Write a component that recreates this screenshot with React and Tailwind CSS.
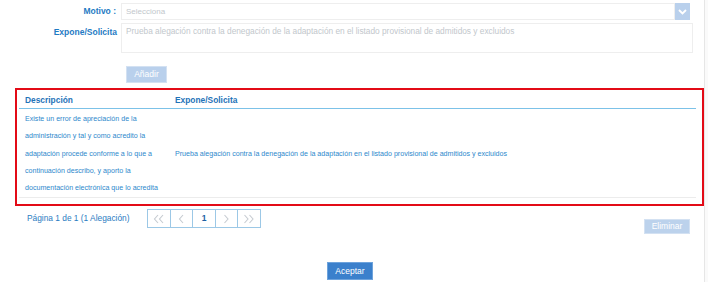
import React from "react";

const descripcion = [
  "Existe un error de apreciación de la",
  "administración y tal y como acredito la",
  "adaptación procede conforme a lo que a",
  "continuación describo, y aporto la",
  "documentación electrónica que lo acredita",
];

const expone =
  "Prueba alegación contra la denegación de la adaptación en el listado provisional de admitidos y excluidos";

function Chevron({ dir = "left", double = false }) {
  const one = dir === "left" ? "M5 1 L1.5 5 L5 9" : "M1.5 1 L5 5 L1.5 9";
  const two = dir === "left" ? "M10 1 L6.5 5 L10 9" : "M6.5 1 L10 5 L6.5 9";
  return (
    <svg width={double ? 12 : 7} height="10" viewBox={`0 0 ${double ? 12 : 7} 10`}>
      <path d={one} fill="none" stroke="#c6cbd1" strokeWidth="1.1" />
      {double && <path d={two} fill="none" stroke="#c6cbd1" strokeWidth="1.1" />}
    </svg>
  );
}

function PagerCell({ width, children, active }) {
  return (
    <div
      className={`${width} h-full flex items-center justify-center border-r border-[#9cc8e6] last:border-r-0 ${
        active ? "text-[#1d5fa3] text-[8.5px] font-bold" : ""
      }`}
    >
      {children}
    </div>
  );
}

export default function App() {
  return (
    <div className="relative w-[708px] h-[282px] bg-white overflow-hidden font-['Liberation_Sans',Arial,sans-serif]">
      {/* scrollbar strip */}
      <div className="absolute right-0 top-0 h-full w-[4px] border-l border-[#e6e6e6] bg-[#fafafa]" />

      <div className="flex flex-col">
        {/* Motivo */}
        <div className="flex items-center mt-[3px] h-[17px]">
          <div className="w-[121px] pr-[5px] text-right text-[8.5px] font-bold text-[#1f7bc4]">Motivo :</div>
          <div className="w-[554px] h-full border border-[#eeeeee] flex items-center px-[4px] text-[8px] text-[#c2c7cc]">
            Selecciona
          </div>
          <div className="w-[15px] h-full bg-[#b9d0ec] flex items-center justify-center">
            <svg width="9" height="6" viewBox="0 0 9 6">
              <path d="M1 1 L4.5 4.5 L8 1" fill="none" stroke="white" strokeWidth="1.8" />
            </svg>
          </div>
        </div>

        {/* Expone/Solicita */}
        <div className="flex items-start mt-[3px] h-[30px]">
          <div className="w-[121px] pr-[4px] pt-[3px] text-right text-[8.5px] font-bold text-[#1f7bc4]">Expone/Solicita</div>
          <div className="w-[572px] h-full border border-[#eeeeee] px-[4px] pt-[2px] text-[8.3px] leading-[11px] text-[#c2c7cc]">
            {expone}
          </div>
        </div>

        {/* Añadir */}
        <div className="ml-[126px] mt-[13px] w-[41px] h-[17px] bg-[#b9d0ec] border border-[#d3e1f2] flex items-center justify-center text-[8.5px] text-white">
          Añadir
        </div>

        {/* Tabla */}
        <div className="ml-[15px] mt-[5px] w-[689px] h-[118px] border-2 border-[#e30b17]">
          <div className="ml-[2px] mr-[6px] flex flex-col">
            <div className="flex h-[19px] items-center border-b border-[#7cc2e8] text-[8.4px] font-bold text-[#1f73b8]">
              <div className="w-[156px] pl-[6px] pt-[3px]">Descripción</div>
              <div className="pt-[3px]">Expone/Solicita</div>
            </div>
            <div className="flex items-center pt-[2px] border-b border-[#ececec] text-[7.1px] leading-[17.3px] text-[#2d88cc]">
              <div className="w-[156px] pl-[6px]">
                {descripcion.map((l) => (
                  <div key={l} className="whitespace-nowrap">{l}</div>
                ))}
              </div>
              <div className="whitespace-nowrap">{expone}</div>
            </div>
          </div>
        </div>

        {/* Paginación */}
        <div className="flex items-start mt-[3px]">
          <div className="ml-[27px] w-[120px] h-[19px] flex items-center text-[8.35px] text-[#2a7cc2]">
            Página 1 de 1 (1 Alegación)
          </div>
          <div className="flex h-[19px] border border-[#9cc8e6]">
            <PagerCell width="w-[23px]"><Chevron dir="left" double /></PagerCell>
            <PagerCell width="w-[22px]"><Chevron dir="left" /></PagerCell>
            <PagerCell width="w-[23px]" active>1</PagerCell>
            <PagerCell width="w-[22px]"><Chevron dir="right" /></PagerCell>
            <PagerCell width="w-[22px]"><Chevron dir="right" double /></PagerCell>
          </div>
          <div className="ml-auto mr-[18px] mt-[10px] w-[46px] h-[15px] bg-[#bcd2ec] border border-[#d3e1f2] flex items-center justify-center text-[8.5px] text-white">
            Eliminar
          </div>
        </div>

        {/* Aceptar */}
        <div className="ml-[327px] mt-[28px] w-[46px] h-[18px] bg-[#3b80cc] border border-[#6ea3dc] flex items-center justify-center text-[8.5px] text-white">
          Aceptar
        </div>
      </div>
    </div>
  );
}
